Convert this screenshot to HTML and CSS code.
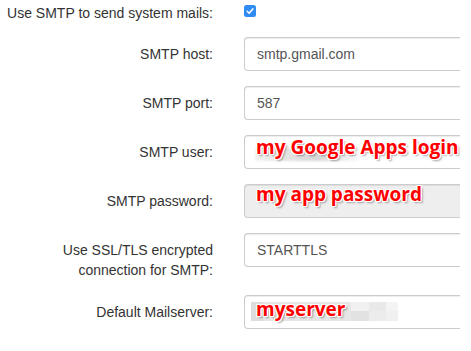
FILE: index.html
```html
<!DOCTYPE html>
<html lang="en">
<head>
    <meta charset="UTF-8">
    <title>Mail settings</title>
    <link rel="stylesheet" href="styles.css">
</head>
<body>
    <form class="settings">
        <div class="form-group first">
            <label class="control-label">Use SMTP to send system mails:</label>
            <div class="field">
                <span class="check">
                    <svg width="12" height="12" viewBox="0 0 12 12">
                        <rect width="12" height="12" rx="2.5" fill="#2f8cf2"/>
                        <path d="M3.2 6.3 L5.1 8.2 L8.8 3.9" fill="none" stroke="#fff" stroke-width="1.6" stroke-linecap="round" stroke-linejoin="round"/>
                    </svg>
                </span>
            </div>
        </div>

        <div class="form-group">
            <label class="control-label">SMTP host:</label>
            <div class="field"><div class="form-control">smtp.gmail.com</div></div>
        </div>

        <div class="form-group">
            <label class="control-label">SMTP port:</label>
            <div class="field"><div class="form-control">587</div></div>
        </div>

        <div class="form-group">
            <label class="control-label">SMTP user:</label>
            <div class="field">
                <div class="form-control"><span class="smudge"></span></div>
                <span class="note note-user">my Google Apps login</span>
            </div>
        </div>

        <div class="form-group">
            <label class="control-label">SMTP password:</label>
            <div class="field">
                <div class="form-control disabled"></div>
                <span class="note note-pass">my app password</span>
            </div>
        </div>

        <div class="form-group">
            <label class="control-label">Use SSL/TLS encrypted<br>connection for SMTP:</label>
            <div class="field"><div class="form-control">STARTTLS</div></div>
        </div>

        <div class="form-group">
            <label class="control-label">Default Mailserver:</label>
            <div class="field">
                <div class="form-control"><span class="mosaic"></span></div>
                <span class="note note-server">myserver</span>
            </div>
        </div>
    </form>
</body>
</html>
```

FILE: styles.css
```css
body {
    margin: 0;
    padding: 0;
    background-color: #fff;
    font-family: 'Liberation Sans', Arial, sans-serif;
    font-size: 14px;
    line-height: 20px;
    color: #333;
}

.settings {
    width: 460px;
}

.form-group {
    display: grid;
    grid-template-columns: 213px 1fr;
    column-gap: 31px;
    margin-bottom: 15px;
}

.form-group.first {
    margin-bottom: 14px;
}

.control-label {
    text-align: right;
    padding-top: 7px;
    white-space: nowrap;
}

.first .control-label {
    padding-top: 3px;
}

.field {
    position: relative;
}

.check {
    display: block;
    width: 12px;
    height: 12px;
    margin-top: 5px;
}

.check svg {
    display: block;
}

/* input is cut off at the right edge of the screenshot */
.form-control {
    box-sizing: border-box;
    width: 100%;
    height: 34px;
    padding: 6px 12px;
    border: 1px solid #ccc;
    border-right: none;
    border-radius: 4px 0 0 4px;
    box-shadow: inset 0 1px 1px rgba(0, 0, 0, 0.075);
    background-color: #fff;
    color: #555;
    position: relative;
}

.form-control.disabled {
    background-color: #eee;
}

.smudge {
    position: absolute;
    left: 10px;
    top: 12px;
    width: 104px;
    height: 13px;
    background: linear-gradient(to right, rgba(0, 0, 0, 0.05), rgba(0, 0, 0, 0.16) 60%, rgba(0, 0, 0, 0.02));
    filter: blur(1px);
}

.mosaic {
    position: absolute;
    left: 6px;
    top: 6px;
    width: 147px;
    height: 19px;
    background:
        linear-gradient(to right, #ddd 0, #ddd 12px, #e6e6e6 12px, #e6e6e6 100px, #e2e2e2 100px, #e2e2e2 118px, #ececec 118px, #ececec 135px, #f0f0f0 135px);
}

.mosaic::after {
    content: '';
    position: absolute;
    left: 100px;
    top: 0;
    width: 47px;
    height: 9px;
    background: linear-gradient(to right, #f1f1f1 0, #f1f1f1 18px, #e9e9e9 18px, #e9e9e9 35px, #f4f4f4 35px);
}

.note {
    position: absolute;
    left: 12px;
    font-family: 'Open Sans', sans-serif;
    font-weight: 700;
    font-size: 19px;
    line-height: 20px;
    color: #f00;
    white-space: nowrap;
    text-shadow:
        1px 0 0 #fff, -1px 0 0 #fff, 0 1px 0 #fff, 0 -1px 0 #fff,
        1px 1px 0 #fff, -1px -1px 0 #fff, 1px -1px 0 #fff, -1px 1px 0 #fff,
        2px 2px 2px rgba(0, 0, 0, 0.35);
}

.note-user {
    top: 2px;
}

.note-pass {
    top: 0;
}

.note-server {
    top: 4px;
}
```
